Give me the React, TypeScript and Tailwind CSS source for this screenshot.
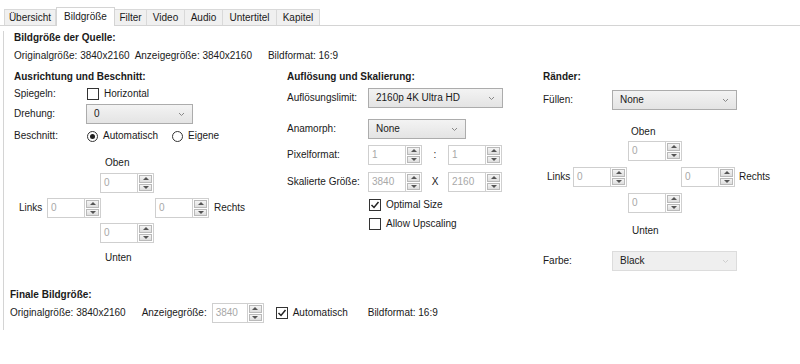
import React from 'react';

const tabs = [
  { label: 'Übersicht', w: 'w-[52px]' },
  { label: 'Bildgröße', w: 'w-[59px]', active: true },
  { label: 'Filter', w: 'w-[32px]' },
  { label: 'Video', w: 'w-[38px]' },
  { label: 'Audio', w: 'w-[38px]' },
  { label: 'Untertitel', w: 'w-[54px]' },
  { label: 'Kapitel', w: 'w-[43px]' },
];

const Spin: React.FC<{ value: string; w?: string }> = ({ value, w = 'w-[54px]' }) => (
  <div className={`flex h-[20px] shrink-0 ${w}`}>
    <div className="flex-1 flex items-center border border-[#cfcfcf] bg-white pl-[3px] text-[#a8a8a8]">{value}</div>
    <div className="w-[16px] flex flex-col border border-l-0 border-[#cfcfcf] bg-white p-[1px] gap-[1px]">
      <div className="flex-1 flex items-center justify-center border border-[#b9b9b9] bg-gradient-to-b from-[#f4f4f4] to-[#dedede]">
        <div className="w-0 h-0 border-x-[3px] border-x-transparent border-b-[3px] border-b-[#555]" />
      </div>
      <div className="flex-1 flex items-center justify-center border border-[#b9b9b9] bg-gradient-to-b from-[#f4f4f4] to-[#dedede]">
        <div className="w-0 h-0 border-x-[3px] border-x-transparent border-t-[3px] border-t-[#555]" />
      </div>
    </div>
  </div>
);

const Chevron: React.FC<{ light?: boolean }> = ({ light }) => (
  <svg width="7" height="5" viewBox="0 0 7 5" className="shrink-0">
    <path d="M1 1 L3.5 3.5 L6 1" fill="none" stroke={light ? '#cfcfcf' : '#888'} strokeWidth="1" />
  </svg>
);

const Select: React.FC<{ value: string; w: string; disabled?: boolean }> = ({ value, w, disabled }) => (
  <div
    className={`flex items-center justify-between h-[20px] pl-[7px] pr-[7px] border ${w} ${
      disabled ? 'border-[#dcdcdc] bg-[#efefef]' : 'border-[#acacac] bg-gradient-to-b from-[#f3f3f3] to-[#e4e4e4]'
    }`}
  >
    <span>{value}</span>
    <Chevron light={disabled} />
  </div>
);

const Check: React.FC<{ checked?: boolean; label: string }> = ({ checked, label }) => (
  <div className="flex items-center gap-[5px]">
    <div className="w-[12px] h-[12px] border border-[#333] bg-white flex items-center justify-center">
      {checked && (
        <svg width="10" height="10" viewBox="0 0 10 10">
          <path d="M1.5 5 L4 7.5 L8.5 2" fill="none" stroke="#222" strokeWidth="1.5" />
        </svg>
      )}
    </div>
    <span>{label}</span>
  </div>
);

const Radio: React.FC<{ checked?: boolean; label: string }> = ({ checked, label }) => (
  <div className="flex items-center gap-[5px]">
    <div className="w-[11px] h-[11px] rounded-full border border-[#333] bg-white flex items-center justify-center">
      {checked && <div className="w-[5px] h-[5px] rounded-full bg-[#222]" />}
    </div>
    <span>{label}</span>
  </div>
);

export default function App() {
  return (
    <div className="w-[800px] h-[364px] bg-white text-[#1a1a1a] text-[10px] leading-[14px] font-['Liberation_Sans',Arial,sans-serif] whitespace-nowrap overflow-hidden">
      {/* tab strip */}
      <div className="flex items-end h-[26px] pl-[4px] border-b border-[#d4d4d4]">
        {tabs.map(t =>
          t.active ? (
            <div key={t.label} className={`${t.w} h-[19px] -mb-px flex items-center justify-center bg-white border border-b-0 border-[#d4d4d4]`}>
              {t.label}
            </div>
          ) : (
            <div key={t.label} className={`${t.w} h-[16px] flex items-center justify-center bg-[#f0f0f0] border border-b-0 border-l-0 first:border-l border-[#d9d9d9]`}>
              {t.label}
            </div>
          )
        )}
      </div>

      <div className="ml-[3px] border-l border-[#d4d4d4] pb-[7px]">
        <div className="pl-[10px]">
          <div className="mt-[5px] h-[14px] font-bold">Bildgröße der Quelle:</div>
          <div className="mt-[4px] h-[14px] flex">
            <span>Originalgröße: 3840x2160</span>
            <span className="ml-[5px]">Anzeigegröße: 3840x2160</span>
            <span className="ml-[16px]">Bildformat: 16:9</span>
          </div>

          <div className="mt-[7px] flex">
            {/* Ausrichtung */}
            <div className="w-[273px] flex flex-col">
              <div className="h-[14px] font-bold">Ausrichtung und Beschnitt:</div>
              <div className="mt-[1px] h-[18px] flex items-center">
                <span className="w-[73px]">Spiegeln:</span>
                <Check label="Horizontal" />
              </div>
              <div className="mt-[1px] h-[20px] flex items-center">
                <span className="w-[72px]">Drehung:</span>
                <Select value="0" w="w-[107px]" />
              </div>
              <div className="mt-[4px] h-[16px] flex items-center">
                <span className="w-[73px]">Beschnitt:</span>
                <Radio checked label="Automatisch" />
                <span className="ml-[14px]">
                  <Radio label="Eigene" />
                </span>
              </div>
              <div className="mt-[12px] h-[14px] ml-[91px]">Oben</div>
              <div className="mt-[3px] ml-[86px]">
                <Spin value="0" />
              </div>
              <div className="mt-[5px] flex items-center">
                <span className="w-[33px] pl-[5px]">Links</span>
                <Spin value="0" />
                <div className="w-[54px]" />
                <Spin value="0" />
                <span className="ml-[5px]">Rechts</span>
              </div>
              <div className="mt-[5px] ml-[86px]">
                <Spin value="0" />
              </div>
              <div className="mt-[8px] h-[14px] ml-[91px]">Unten</div>
            </div>

            {/* Auflösung */}
            <div className="w-[256px] flex flex-col">
              <div className="h-[14px] font-bold">Auflösung und Skalierung:</div>
              <div className="mt-[4px] h-[20px] flex items-center">
                <span className="w-[81px]">Auflösungslimit:</span>
                <Select value="2160p 4K Ultra HD" w="w-[135px]" />
              </div>
              <div className="mt-[11px] h-[20px] flex items-center">
                <span className="w-[81px]">Anamorph:</span>
                <Select value="None" w="w-[98px]" />
              </div>
              <div className="mt-[6px] h-[20px] flex items-center">
                <span className="w-[81px]">Pixelformat:</span>
                <Spin value="1" />
                <span className="w-[26px] text-center">:</span>
                <Spin value="1" />
              </div>
              <div className="mt-[7px] h-[20px] flex items-center">
                <span className="w-[81px]">Skalierte Größe:</span>
                <Spin value="3840" />
                <span className="w-[26px] text-center">X</span>
                <Spin value="2160" />
              </div>
              <div className="mt-[5px] h-[16px] ml-[82px] flex items-center">
                <Check checked label="Optimal Size" />
              </div>
              <div className="mt-[3px] h-[16px] ml-[82px] flex items-center">
                <Check label="Allow Upscaling" />
              </div>
            </div>

            {/* Ränder */}
            <div className="flex-1 flex flex-col">
              <div className="h-[14px] font-bold">Ränder:</div>
              <div className="mt-[6px] h-[20px] flex items-center">
                <span className="w-[69px]">Füllen:</span>
                <Select value="None" w="w-[125px]" />
              </div>
              <div className="mt-[15px] h-[14px] ml-[88px]">Oben</div>
              <div className="mt-[2px] ml-[85px]">
                <Spin value="0" />
              </div>
              <div className="mt-[6px] flex items-center">
                <span className="w-[30px] pl-[4px]">Links</span>
                <Spin value="0" />
                <div className="w-[54px]" />
                <Spin value="0" />
                <span className="ml-[4px]">Rechts</span>
              </div>
              <div className="mt-[6px] ml-[85px]">
                <Spin value="0" />
              </div>
              <div className="mt-[11px] h-[14px] ml-[89px]">Unten</div>
              <div className="mt-[13px] h-[20px] flex items-center">
                <span className="w-[69px]">Farbe:</span>
                <Select value="Black" w="w-[125px]" disabled />
              </div>
            </div>
          </div>
        </div>

        <div className="pl-[6px]">
          <div className="mt-[17px] h-[14px] font-bold">Finale Bildgröße:</div>
          <div className="mt-[1px] h-[20px] flex items-center">
            <span>Originalgröße: 3840x2160</span>
            <span className="ml-[16px]">Anzeigegröße:</span>
            <span className="ml-[5px]">
              <Spin value="3840" w="w-[52px]" />
            </span>
            <span className="ml-[12px]">
              <Check checked label="Automatisch" />
            </span>
            <span className="ml-[20px]">Bildformat: 16:9</span>
          </div>
        </div>
      </div>
    </div>
  );
}
